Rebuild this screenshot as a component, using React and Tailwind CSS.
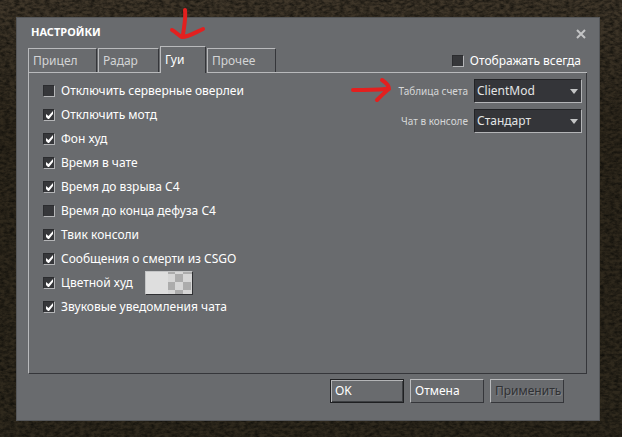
import { useState } from "react";

const TABS = ["Прицел", "Радар", "Гуи", "Прочее"];

const TAB_WIDTHS = ["w-[69px]", "w-[61px]", "w-[46px]", "w-[69px]"];

const OPTIONS = [
  { id: "overlays", label: "Отключить серверные оверлеи", on: false },
  { id: "motd", label: "Отключить мотд", on: true },
  { id: "hud-bg", label: "Фон худ", on: true },
  { id: "chat-time", label: "Время в чате", on: true },
  { id: "c4-explode", label: "Время до взрыва C4", on: true },
  { id: "c4-defuse", label: "Время до конца дефуза C4", on: false },
  { id: "console", label: "Твик консоли", on: true },
  { id: "csgo-deaths", label: "Сообщения о смерти из CSGO", on: true },
  { id: "hud-color", label: "Цветной худ", on: true, swatch: true },
  { id: "chat-sounds", label: "Звуковые уведомления чата", on: true },
];

function Checkbox({ id, label, defaultChecked = false }) {
  return (
    <label htmlFor={id} className="flex items-center gap-[6px] whitespace-nowrap text-white">
      <span className="grid size-3">
        <input
          id={id}
          type="checkbox"
          defaultChecked={defaultChecked}
          className="peer col-start-1 row-start-1 size-3 appearance-none border border-t-[#2b2c2f] border-r-[#b4b5b7] border-b-[#b4b5b7] border-l-[#2b2c2f] bg-[#36373a]"
        />
        <svg
          viewBox="0 0 12 12"
          className="pointer-events-none invisible col-start-1 row-start-1 size-3 peer-checked:visible"
        >
          <path d="M3 5v3l2 2h1l4-5V2L5.500 7Z" fill="#fff" />
        </svg>
      </span>
      {label}
    </label>
  );
}

function Dropdown({ id, label, options }) {
  return (
    <div className="flex items-center gap-[6px]">
      <label htmlFor={id} className="text-[10px] whitespace-nowrap text-[#d6d7d8]">
        {label}
      </label>
      <div className="grid w-[108px] items-center">
        <select
          id={id}
          className="col-start-1 row-start-1 h-6 w-full appearance-none border border-t-[#222326] border-r-[#b4b5b7] border-b-[#b4b5b7] border-l-[#222326] bg-[#343539] px-[2px] text-[#e3e4e5] outline-none"
        >
          {options.map((option) => (
            <option key={option}>{option}</option>
          ))}
        </select>
        <svg
          viewBox="0 0 8 5"
          className="pointer-events-none col-start-1 row-start-1 mr-1 h-[5px] w-2 justify-self-end"
        >
          <path d="M0 0h8L4 5Z" fill="#c4c5c6" />
        </svg>
      </div>
    </div>
  );
}

function ColorSwatch() {
  return (
    <button
      type="button"
      aria-label="Цвет худа"
      className="flex h-6 w-12 border border-t-[#c4c5c6] border-r-[#2f3033] border-b-[#2f3033] border-l-[#c4c5c6] bg-[#dedede]"
    >
      <svg viewBox="0 0 24 22" className="ml-auto h-full w-6">
        <path fill="#d6d6d6" d="M0 0h24v22H0z" />
        <path fill="#acacac" d="M0 0h7v2H0zM15 0h9v2h-9zM7 2h8v8H7zM0 10h7v8H0zM15 10h8v8h-8zM7 18h8v4H7z" />
      </svg>
    </button>
  );
}

function Ground() {
  return (
    <svg aria-hidden="true" className="pointer-events-none absolute inset-0 size-full">
      <defs>
        <linearGradient id="ground" x1="0" y1="0" x2="0" y2="1">
          <stop offset="0" stopColor="#40372a" />
          <stop offset="0.3" stopColor="#2f281c" />
          <stop offset="1" stopColor="#2f291d" />
        </linearGradient>
        <filter id="grain" x="0" y="0" width="100%" height="100%" colorInterpolationFilters="sRGB">
          <feTurbulence type="fractalNoise" baseFrequency="0.2 0.35" numOctaves="3" seed="4" />
          <feColorMatrix values="0 0 0 0 0.03  0 0 0 0 0.03  0 0 0 0 0.02  1.300 0 0 0 -0.400" />
        </filter>
      </defs>
      <rect width="100%" height="100%" fill="url(#ground)" />
      <rect width="100%" height="100%" filter="url(#grain)" />
    </svg>
  );
}

export default function App() {
  const [active, setActive] = useState(2);

  return (
    <div className="relative flex min-h-screen pt-[17px] pr-[22px] pb-4 pl-4 font-['Noto_Sans','DejaVu_Sans',sans-serif] text-[12px] leading-4">
      <Ground />

      <main className="relative flex flex-1 flex-col border border-[#55575a] bg-[#696b6e] pr-3 pl-[11px]">
        <header className="flex h-7 items-center justify-between pr-px pl-[3px]">
          <h1 className="text-[11px] font-bold text-white">НАСТРОЙКИ</h1>
          <button type="button" aria-label="Закрыть" className="mt-1 text-[#c3c4c5]">
            <svg viewBox="0 0 10 10" className="size-[10px]">
              <path d="m1 1 8 8M9 1 1 9" stroke="currentColor" strokeWidth="2" />
            </svg>
          </button>
        </header>

        <div className="flex h-[27px] items-end">
          <div role="tablist" className="flex items-end">
            {TABS.map((tab, i) => (
              <div
                key={tab}
                className={`flex pr-px ${i === active ? "" : "border-b border-[#b9babc]"}`}
              >
                <button
                  type="button"
                  role="tab"
                  aria-selected={i === active}
                  onClick={() => setActive(i)}
                  className={`border-t border-r border-l border-t-[#b9babc] border-r-[#35363a] border-l-[#b9babc] pl-1 text-left ${TAB_WIDTHS[i]} ${
                    i === active ? "h-[27px] text-white" : "h-6 text-[#d3d4d5]"
                  }`}
                >
                  {tab}
                </button>
              </div>
            ))}
          </div>
          <div className="flex h-full flex-1 items-center justify-end border-b border-[#b9babc] pt-1 pr-[6px]">
            <Checkbox id="always" label="Отображать всегда" />
          </div>
        </div>

        <section className="flex flex-1 items-start justify-between border-r border-b border-l border-r-[#35363a] border-b-[#35363a] border-l-[#b9babc] pt-[6px] pr-1 pl-[14px]">
          <ul>
            {OPTIONS.map((option) => (
              <li key={option.id} className="flex h-6 items-center gap-3">
                <Checkbox id={option.id} label={option.label} defaultChecked={option.on} />
                {option.swatch && <ColorSwatch />}
              </li>
            ))}
          </ul>
          <div className="flex flex-col items-end gap-[6px]">
            <Dropdown id="scoreboard" label="Таблица счета" options={["ClientMod", "Стандарт"]} />
            <Dropdown id="console-chat" label="Чат в консоле" options={["Стандарт", "ClientMod"]} />
          </div>
        </section>

        <footer className="flex justify-end gap-[6px] pt-[5px] pr-[23px] pb-[17px]">
          <button
            type="button"
            className="h-6 w-[74px] border border-[#1f2022] pl-1 text-left text-white inset-shadow-[1px_1px_0_#b4b5b7,-1px_-1px_0_#3e4043]"
          >
            OK
          </button>
          <button
            type="button"
            className="h-6 w-[74px] border border-t-[#b9babc] border-r-[#35363a] border-b-[#35363a] border-l-[#b9babc] pl-1 text-left text-white"
          >
            Отмена
          </button>
          <button
            type="button"
            disabled
            className="h-6 w-[74px] border border-t-[#b9babc] border-r-[#35363a] border-b-[#35363a] border-l-[#b9babc] pl-1 text-left text-[#303134] text-shadow-[1px_1px_0_#808285]"
          >
            Применить
          </button>
        </footer>
      </main>

      <svg
        viewBox="0 0 38 34"
        aria-hidden="true"
        className="pointer-events-none absolute top-[6px] left-[169px] h-[34px] w-[38px]"
      >
        <path
          d="M16 4C17 13 15 20 14 29M3 24C7 26 10 30 13 31C20 31 27 26 34 23"
          fill="none"
          stroke="#e3201f"
          strokeWidth="4"
          strokeLinecap="round"
          strokeLinejoin="round"
        />
      </svg>
      <svg
        viewBox="0 0 44 28"
        aria-hidden="true"
        className="pointer-events-none absolute top-[76px] left-[349px] h-7 w-11"
      >
        <path
          d="M4 14C14 14 25 14 37 13M33 4C36 6 40 10 40 13C36 16 32 20 28 24"
          fill="none"
          stroke="#e3201f"
          strokeWidth="4"
          strokeLinecap="round"
          strokeLinejoin="round"
        />
      </svg>
    </div>
  );
}
